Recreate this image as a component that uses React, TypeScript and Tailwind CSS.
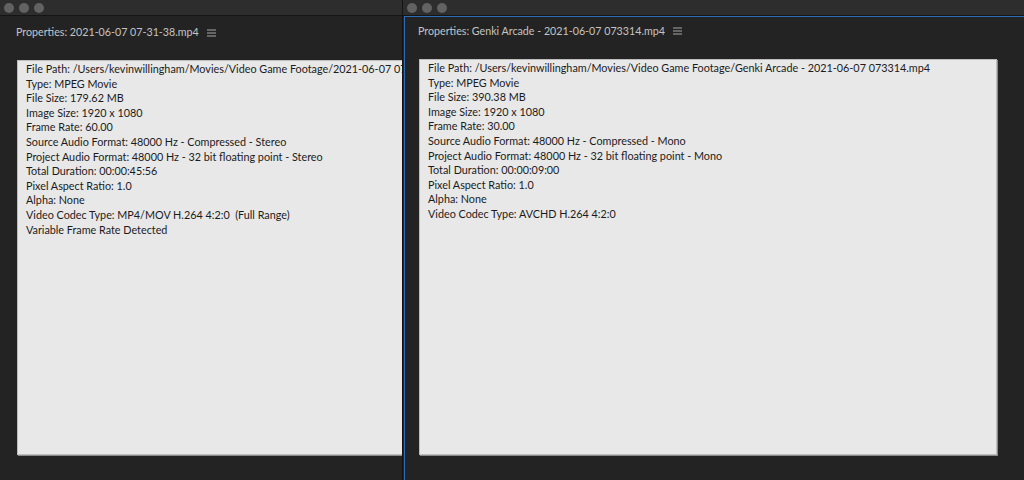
import React from 'react';

const leftProps = [
  'File Path: /Users/kevinwillingham/Movies/Video Game Footage/2021-06-07 07-31-38.mp4',
  'Type: MPEG Movie',
  'File Size: 179.62 MB',
  'Image Size: 1920 x 1080',
  'Frame Rate: 60.00',
  'Source Audio Format: 48000 Hz - Compressed - Stereo',
  'Project Audio Format: 48000 Hz - 32 bit floating point - Stereo',
  'Total Duration: 00:00:45:56',
  'Pixel Aspect Ratio: 1.0',
  'Alpha: None',
  'Video Codec Type: MP4/MOV H.264 4:2:0  (Full Range)',
  'Variable Frame Rate Detected',
];

const rightProps = [
  'File Path: /Users/kevinwillingham/Movies/Video Game Footage/Genki Arcade - 2021-06-07 073314.mp4',
  'Type: MPEG Movie',
  'File Size: 390.38 MB',
  'Image Size: 1920 x 1080',
  'Frame Rate: 30.00',
  'Source Audio Format: 48000 Hz - Compressed - Mono',
  'Project Audio Format: 48000 Hz - 32 bit floating point - Mono',
  'Total Duration: 00:00:09:00',
  'Pixel Aspect Ratio: 1.0',
  'Alpha: None',
  'Video Codec Type: AVCHD H.264 4:2:0',
];

const TitleBar = () => (
  <div className="h-[16px] bg-[#2d2d2d] border-b border-[#151515] flex items-center gap-[5px] pl-[4px] shrink-0">
    <span className="w-[10px] h-[10px] rounded-full bg-[#626262]" />
    <span className="w-[10px] h-[10px] rounded-full bg-[#626262]" />
    <span className="w-[10px] h-[10px] rounded-full bg-[#626262]" />
  </div>
);

const Menu = () => (
  <svg width="9" height="8" viewBox="0 0 9 8" className="ml-[8px]">
    <path d="M0 1h9M0 4h9M0 7h9" stroke="#a8a8a8" strokeWidth="1" />
  </svg>
);

const PropsBox = ({ lines }: { lines: string[] }) => (
  <div className="bg-[#e8e8e8] border border-[#bdbdbd] shadow-[1px_1px_0_#8a8a8a] pl-[8px] pt-[1px] text-[#1b1b1b] text-[10.8px] leading-[14.6px] whitespace-pre h-full">
    {lines.map((l, i) => (
      <div key={i}>{l}</div>
    ))}
  </div>
);

export default function App() {
  return (
    <div className="w-[1024px] h-[480px] bg-[#232323] flex overflow-hidden" style={{ fontFamily: 'Lato, "Open Sans", sans-serif' }}>
      {/* left window */}
      <div className="w-[402px] shrink-0 flex flex-col overflow-hidden">
        <TitleBar />
        <div className="flex flex-col flex-1 pl-[17px] pb-[25px]">
          <div className="h-[30px] flex items-center text-[#c4c4c4] text-[10.7px] pt-[1px] -ml-[1px] mt-[1px]">
            <span>Properties: 2021-06-07 07-31-38.mp4</span>
            <Menu />
          </div>
          <div className="mt-[13px] flex-1 w-[420px]">
            <PropsBox lines={leftProps} />
          </div>
        </div>
      </div>

      {/* right window */}
      <div className="flex-1 flex flex-col border-l border-[#141414]">
        <TitleBar />
        <div className="flex-1 flex flex-col ml-[1px] border-l border-t border-[#2f6cb8] pl-[14px] pr-[27px] pb-[25px]">
          <div className="h-[28px] flex items-center text-[#c4c4c4] text-[10.7px] -ml-[1px]">
            <span>Properties: Genki Arcade - 2021-06-07 073314.mp4</span>
            <Menu />
          </div>
          <div className="mt-[14px] flex-1">
            <PropsBox lines={rightProps} />
          </div>
        </div>
      </div>
    </div>
  );
}
